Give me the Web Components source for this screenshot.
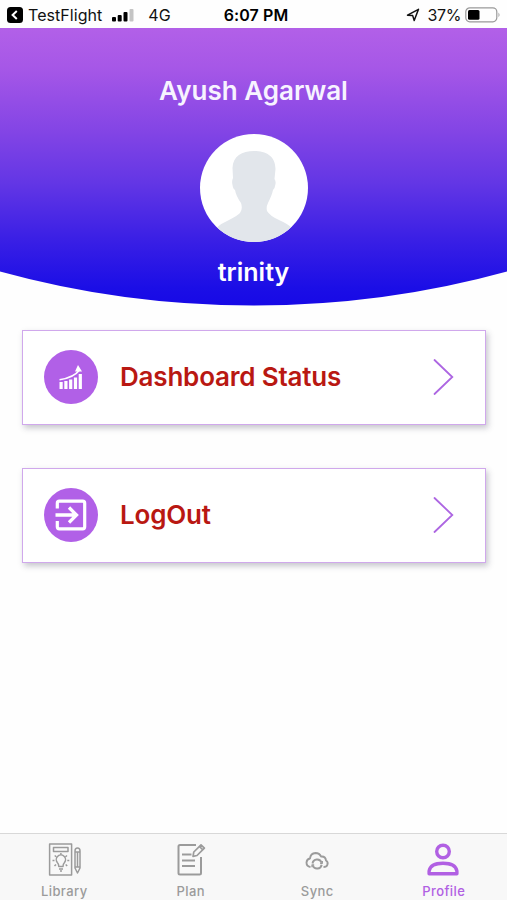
<!DOCTYPE html>
<html lang="en">
<head>
<meta charset="utf-8">
<title>Profile</title>
<style>
html,body{margin:0;padding:0}
body{font-family:Inter,"Liberation Sans",sans-serif;background:#fefefe;color:#111}
</style>
</head>
<body>
<profile-screen></profile-screen>
<script>
const define = (name, html) => customElements.define(name, class extends HTMLElement {
  constructor() {
    super();
    this.attachShadow({ mode: 'open' }).innerHTML = html;
  }
});

define('status-bar', `
<style>
:host{display:grid;grid-template-columns:1fr auto 1fr;align-items:center;height:28px;padding:2px 6px 0 7px;box-sizing:border-box;font-size:16px;line-height:26px;white-space:nowrap;background:#fefefe}
.side{display:flex;align-items:center}
.right{justify-content:flex-end}
.app{margin-left:5px;letter-spacing:.05px}
.signal{margin-left:10px}
.net{margin-left:14px}
.time{font-weight:600;color:#000;letter-spacing:.1px;padding-left:4px}
.pct{margin-left:8px;letter-spacing:-.4px}
.battery{margin-left:4px}
svg{display:block;flex:none}
</style>
<div class="side">
  <svg width="16" height="16" viewBox="0 0 16 16"><rect width="16" height="16" rx="3.5" fill="#000"/><path d="M9.8 4 5.6 8l4.2 4" fill="none" stroke="#fff" stroke-width="2"/></svg>
  <span class="app">TestFlight</span>
  <svg class="signal" width="22" height="13" viewBox="0 0 22 13"><g fill="#000"><rect y="8" width="4" height="4.5" rx="1"/><rect x="5.7" y="6" width="4" height="6.500" rx="1"/><rect x="11.500" y="3" width="4" height="9.500" rx="1"/></g><rect x="17.500" y="0" width="4" height="12.500" rx="1" fill="#c4c4c4"/></svg>
  <span class="net">4G</span>
</div>
<span class="time">6:07 PM</span>
<div class="side right">
  <svg width="14" height="14" viewBox="0 0 14 14"><path d="M12.500 1.300 1.500 7.200l5.200.4 1.500 4.900z" fill="none" stroke="#111" stroke-width="1.500" stroke-linejoin="round"/></svg>
  <span class="pct">37%</span>
  <svg class="battery" width="36" height="16" viewBox="0 0 36 16"><rect x=".8" y=".8" width="31" height="14" rx="4" fill="none" stroke="#999" stroke-width="1.200"/><rect x="3" y="3" width="11.500" height="9.800" rx="1.500" fill="#000"/><path d="M33.500 5.500q2 2.400 0 4.800z" fill="#999"/></svg>
</div>`);

define('user-avatar', `
<style>
:host{display:block;width:108px;height:108px}
svg{display:block}
</style>
<svg width="108" height="108" viewBox="0 0 108 108">
  <defs><clipPath id="disc"><circle cx="54" cy="54" r="54"/></clipPath></defs>
  <circle cx="54" cy="54" r="54" fill="#fff"/>
  <path clip-path="url(#disc)" fill="#e2e6eb" d="M54 17C42 17 33 22 32.500 34L33 44Q31.500 47 32.500 51Q33 55 35 56Q36 62 41 69Q43 75 40 79Q37 82 29 86Q22 89 16 94V110H92V94Q88 90 79 86Q70 82 67 77Q66 73 68 69Q72 61 73 56Q75 54 75.500 50Q76 47 74.500 45L75.500 35C75.500 22 66 17 54 17Z"/>
</svg>`);

define('profile-header', `
<style>
:host{display:flex;flex-direction:column;align-items:center;height:278px;box-sizing:border-box;padding-top:46px;color:#f7f3ff;
 background:linear-gradient(#b260e8 0,#a657e7 40px,#8244e5 105px,#6336e5 155px,#3b20e5 210px,#1b0ee6 260px,#1709e6 100%);
 clip-path:path("M0 0H507V243.500Q384 277.500 253.500 277.500Q123 277.500 0 243.500Z")}
.name{font-size:26px;line-height:34px;font-weight:600;margin-bottom:26px}
.role{font-size:25px;line-height:34px;font-weight:600;margin-top:13px;color:#fff}
</style>
<div class="name"><slot name="name"></slot></div>
<user-avatar></user-avatar>
<div class="role"><slot name="role"></slot></div>`);

define('menu-card', `
<style>
:host{display:flex;align-items:center;box-sizing:border-box;height:95px;padding:0 31px 0 21px;background:#fff;border:1px solid #d0a8ec;box-shadow:2px 3px 6px rgba(40,40,60,.26)}
.disc{width:54px;height:54px;border-radius:50%;background:#b160e7;flex:none}
.label{flex:1;margin-left:22px;font-size:26px;font-weight:600;line-height:34px;color:#b91812;white-space:nowrap;letter-spacing:-.2px}
svg{display:block;flex:none}
</style>
<div class="disc"><slot name="icon"></slot></div>
<div class="label"><slot></slot></div>
<svg width="21" height="38" viewBox="0 0 21 38"><path d="M1.500 2 19.300 19 1.500 36" fill="none" stroke="#ad66e2" stroke-width="1.800" stroke-linecap="round"/></svg>`);

define('chart-icon', `
<style>:host,svg{display:block}</style>
<svg width="54" height="54" viewBox="0 0 54 54"><g fill="#fff"><path d="M15.500 32h3.200v7h-3.200zM20.300 31h3.200v8h-3.200zM25.100 29.500h3.200v9.500h-3.200zM29.900 27.500h3.200v11.500h-3.200zM34.700 24h3.200v15h-3.200zM34 15l4 6.500h-7z"/></g><path d="M15.500 29.800Q30 27.500 35.500 20" fill="none" stroke="#fff" stroke-width="1.600"/></svg>`);

define('exit-icon', `
<style>:host,svg{display:block}</style>
<svg width="54" height="54" viewBox="0 0 54 54" fill="none" stroke="#fff"><path d="M13.300 20.500V15.200q0-2 2-2h23.400q2 0 2 2v23.600q0 2-2 2H15.300q-2 0-2-2V33" stroke-width="3.200"/><path d="M11.500 27H32M25 19.500l7.500 7.500-7.500 7.500" stroke-width="3.300"/></svg>`);

const glyphs = {
  library: '<g stroke-width="1.500" transform="translate(1)"><rect x="1.600" y="2" width="22" height="31"/><rect x="5.500" y="5.600" width="14.500" height="4"/><path d="M10.800 24.500Q10.800 22 9.300 20.500A4.600 4.600 0 1 1 16.500 20.500Q15 22 15 24.500zM11 27h4M12 29h2M12.900 11v1.800M6.700 13.500l1.500 1.300M19 13.500l-1.500 1.300M4.500 18.500h2M19.300 18.500h2M6.500 24l1.500-1.500M19.200 24l-1.500-1.500"/><path d="M27 9q0-3 2.500-3T32 9V26l-2.500 5L27 26zM27 10h5M27 25h5M29.500 10v15"/></g>',
  plan: '<g stroke-width="2" transform="translate(2)"><path d="M20 3H4Q2.500 3 2.500 4.500V31Q2.500 32.500 4 32.500H23.500Q25 32.500 25 31V15"/><path d="M6 12.500H15.500M6 18.500H19M6 24H19"/><path d="M17.800 10 25 2.800l3.400 3.400L21 13.500l-4 .8zM23.500 4.500l3.300 3.300" stroke-width="1.700"/></g>',
  sync: '<g stroke-width="1.900"><path d="M10.500 25Q6.500 24.500 6.500 20.500Q6.800 17 10 16.500Q10.500 11.300 15.500 11Q19.500 11 21 14.500Q25.500 14 26 18.500Q28.500 20 27.300 23Q26.600 25 23.500 25"/><path d="M12.500 21.500A4.700 4.700 0 0 1 21.600 20.700M21.700 22.700A4.700 4.700 0 0 1 12.700 23.500" /><path d="M22.300 19v2.300h-2.200M12 25.300V23h2.200" stroke-width="1.300"/></g>',
  profile: '<g stroke-width="3.400"><circle cx="16" cy="9.500" r="6.300"/><path d="M2.100 31.700V29Q3.500 21.200 16 21.200T29.900 29V31.700Z"/></g>'
};

customElements.define('tab-item', class extends HTMLElement {
  constructor() {
    super();
    this.attachShadow({ mode: 'open' }).innerHTML = `
<style>
:host{display:flex;flex-direction:column;align-items:center;flex:1;color:#9b9b9b;padding-top:8px;font-size:13px;line-height:16px;font-weight:500;letter-spacing:.4px}
:host([active]){color:#b160e3}
svg{display:block;margin-bottom:6px}
</style>
<svg width="34" height="35" viewBox="0 0 34 35" fill="none" stroke="currentColor" stroke-linejoin="round">${glyphs[this.getAttribute('icon')]}</svg>
<slot></slot>`;
  }
});

define('tab-bar', `
<style>:host{display:flex;height:67px;box-sizing:border-box;padding-left:1px;border-top:1px solid #d8d8d8;background:#f8f8f8}</style>
<slot></slot>`);

define('profile-screen', `
<style>
:host{display:flex;flex-direction:column;width:507px;height:900px;overflow:hidden}
main{flex:1;display:flex;flex-direction:column;gap:43px;padding:23.5px 21px 0 22px}
</style>
<status-bar></status-bar>
<profile-header><span slot="name">Ayush Agarwal</span><span slot="role">trinity</span></profile-header>
<main>
  <menu-card><chart-icon slot="icon"></chart-icon>Dashboard Status</menu-card>
  <menu-card><exit-icon slot="icon"></exit-icon>LogOut</menu-card>
</main>
<tab-bar>
  <tab-item icon="library">Library</tab-item>
  <tab-item icon="plan">Plan</tab-item>
  <tab-item icon="sync">Sync</tab-item>
  <tab-item icon="profile" active>Profile</tab-item>
</tab-bar>`);
</script>
</body>
</html>
